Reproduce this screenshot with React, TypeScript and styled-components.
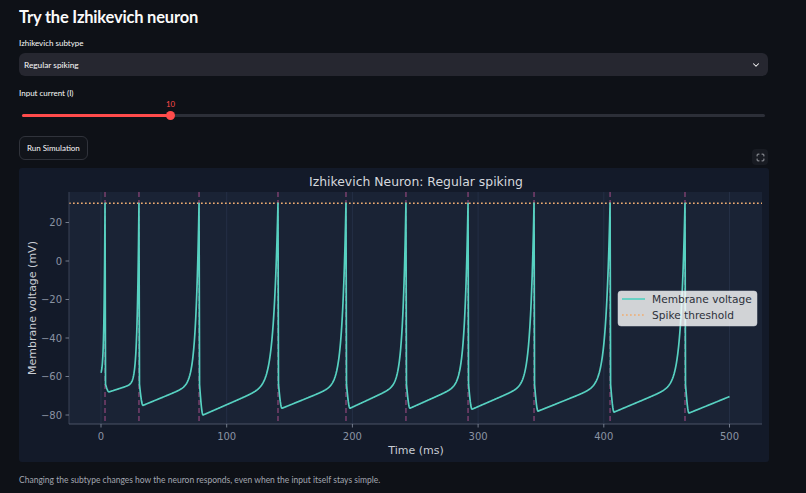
import React from 'react';
import styled, { createGlobalStyle } from 'styled-components';
import { ChevronDown, Maximize } from 'lucide-react';

const GlobalStyle = createGlobalStyle`
  html, body {
    margin: 0;
    padding: 0;
    background: #0e1117;
  }
  body {
    font-family: Lato, "Noto Sans", sans-serif;
    color: #fafafa;
  }
`;

// simulation output, read off the run that the page shows
const SPIKES = [3.2, 30.2, 78.0, 140.8, 194.9, 242.6, 292.0, 344.5, 405.0, 464.6];
const TROUGHS = [-68, -75, -80, -76.5, -76.5, -76.5, -77, -78, -78.5, -79];
const T_END = 500;

const FIG_W = 750;
const FIG_H = 294;
const AX = { left: 50, right: 743, top: 24, bottom: 256 };

const sx = (t: number) => 82 + 1.257 * t;
const sy = (v: number) => 93 - 1.925 * v;

const K = 17;
const rise = (vmin: number, p: number) => {
  const A = -63 - vmin;
  return vmin + A * p + (30 - vmin - A) * (Math.exp(K * p) - 1) / (Math.exp(K) - 1);
};

function voltagePath(): string {
  const pts: [number, number][] = [];
  const t0 = SPIKES[0];
  for (let i = 0; i <= 20; i++) {
    const p = i / 20;
    pts.push([p * t0, -58 + 88 * (Math.exp(4 * p) - 1) / (Math.exp(4) - 1)]);
  }
  SPIKES.forEach((ts, i) => {
    const vmin = TROUGHS[i];
    const next = i + 1 < SPIKES.length ? SPIKES[i + 1] : 528;
    pts.push([ts + 0.4, -64]);
    const tmin = ts + 3.2;
    for (let k = 1; k <= 8; k++) {
      const p = k / 8;
      pts.push([ts + 0.4 + p * 2.8, -64 + (vmin + 64) * Math.sin((p * Math.PI) / 2)]);
    }
    const end = Math.min(next, T_END);
    for (let t = tmin + 0.25; t < end; t += 0.25) {
      pts.push([t, Math.min(rise(vmin, (t - tmin) / (next - tmin)), 30)]);
    }
    if (next <= T_END) pts.push([next, 30]);
    else pts.push([T_END, rise(vmin, (T_END - tmin) / (next - tmin))]);
  });
  return pts
    .map(([t, v], i) => `${i ? 'L' : 'M'}${sx(t).toFixed(2)},${sy(v).toFixed(2)}`)
    .join('');
}

const X_TICKS = [0, 100, 200, 300, 400, 500];
const Y_TICKS = [20, 0, -20, -40, -60, -80];

const fmt = (n: number) => (n < 0 ? `\u2212${-n}` : `${n}`);

const Page = styled.main`
  display: flex;
  flex-direction: column;
  padding: 6px 38px 0 19px;
`;

const Title = styled.h1`
  margin: 0;
  font-size: 16.5px;
  line-height: 22px;
  font-weight: 700;
  letter-spacing: -0.2px;
`;

const FieldLabel = styled.div<{ $top: number }>`
  margin-top: ${(p) => p.$top}px;
  font-size: 8px;
  line-height: 12px;
  color: #fafafa;
`;

const Select = styled.div`
  margin-top: 4px;
  height: 23px;
  border-radius: 6px;
  background: #262730;
  display: flex;
  align-items: center;
  justify-content: space-between;
  padding: 0 7px 0 5px;
  font-size: 8.3px;
`;

const Slider = styled.div`
  position: relative;
  height: 22px;
  margin: 0 3px 0 3px;
`;

const Track = styled.div`
  position: absolute;
  left: 0;
  right: 0;
  top: 15px;
  height: 3px;
  border-radius: 2px;
  background: #2c2f38;
`;

const Fill = styled.div`
  height: 100%;
  border-radius: 2px;
  background: #ff4b4b;
`;

const Thumb = styled.div`
  position: absolute;
  top: 12px;
  width: 9px;
  height: 9px;
  margin-left: -4.5px;
  border-radius: 50%;
  background: #ff4b4b;
`;

const ThumbValue = styled.div`
  position: absolute;
  top: 0;
  width: 30px;
  margin-left: -15px;
  text-align: center;
  font-size: 7.8px;
  line-height: 10px;
  color: #ff4b4b;
`;

const Button = styled.button`
  align-self: flex-start;
  margin-top: 15px;
  height: 24px;
  padding: 0 7px;
  border-radius: 6px;
  border: 1px solid #30333b;
  background: #11141a;
  color: #fafafa;
  font-family: inherit;
  font-size: 8px;
`;

const ChartBlock = styled.div`
  position: relative;
  margin-top: 8px;
`;

const Toolbar = styled.div`
  position: absolute;
  right: 0;
  top: -19px;
  width: 16px;
  height: 16px;
  border-radius: 4px;
  background: #181b22;
  display: flex;
  align-items: center;
  justify-content: center;
  color: #c9ccd2;
`;

const Figure = styled.svg`
  display: block;
  border-radius: 3px;
  font-family: "DejaVu Sans", sans-serif;
`;

const Caption = styled.p`
  margin: 12px 0 0;
  font-size: 8.5px;
  line-height: 12px;
  color: #a2a6b0;
`;

const TEAL = '#57d1c1';
const THRESH = '#f0ad72';
const TICK = '#8a93a3';

const NeuronChart: React.FC = () => {
  const d = voltagePath();
  return (
    <Figure width={FIG_W} height={FIG_H} viewBox={`0 0 ${FIG_W} ${FIG_H}`}>
      <rect width={FIG_W} height={FIG_H} fill="#131a29" />
      <rect x={AX.left} y={AX.top} width={AX.right - AX.left} height={AX.bottom - AX.top} fill="#1a2335" />
      {X_TICKS.map((t) => (
        <line key={t} x1={sx(t)} x2={sx(t)} y1={AX.top} y2={AX.bottom} stroke="#27324a" strokeWidth={0.8} />
      ))}
      {SPIKES.map((t) => (
        <line
          key={t}
          x1={sx(t)}
          x2={sx(t)}
          y1={AX.top}
          y2={AX.bottom}
          stroke="#a24c86"
          strokeOpacity={0.75}
          strokeWidth={1.4}
          strokeDasharray="5 3"
        />
      ))}
      <line x1={AX.left} x2={AX.right} y1={sy(30)} y2={sy(30)} stroke={THRESH} strokeWidth={1.7} strokeDasharray="1.7 2.3" />
      <path d={d} fill="none" stroke={TEAL} strokeWidth={1.7} strokeLinejoin="round" />
      <line x1={AX.left} x2={AX.left} y1={AX.top} y2={AX.bottom} stroke="#3a4356" strokeWidth={1} />
      <line x1={AX.left} x2={AX.right} y1={AX.bottom} y2={AX.bottom} stroke="#4a5366" strokeWidth={1} />
      {X_TICKS.map((t) => (
        <g key={t}>
          <line x1={sx(t)} x2={sx(t)} y1={AX.bottom} y2={AX.bottom + 3.5} stroke={TICK} strokeWidth={0.8} />
          <text x={sx(t)} y={271.5} fontSize={10} fill={TICK} textAnchor="middle">
            {fmt(t)}
          </text>
        </g>
      ))}
      {Y_TICKS.map((v) => (
        <g key={v}>
          <line x1={AX.left - 3.5} x2={AX.left} y1={sy(v)} y2={sy(v)} stroke={TICK} strokeWidth={0.8} />
          <text x={AX.left - 7} y={sy(v) + 3.6} fontSize={10} fill={TICK} textAnchor="end">
            {fmt(v)}
          </text>
        </g>
      ))}
      <text x={397} y={17.5} fontSize={12.4} fill="#d5d8de" textAnchor="middle">
        Izhikevich Neuron: Regular spiking
      </text>
      <text x={397} y={286} fontSize={11} fill="#c9cdd4" textAnchor="middle">
        Time (ms)
      </text>
      <text
        x={13}
        y={140}
        fontSize={11}
        fill="#c9cdd4"
        textAnchor="middle"
        dominantBaseline="central"
        transform="rotate(-90 13 140)"
      >
        Membrane voltage (mV)
      </text>
      <g>
        <rect x={599} y={123} width={139} height={35} rx={3} fill="#ffffff" fillOpacity={0.8} stroke="#cfd2d8" strokeWidth={0.5} />
        <line x1={603} x2={626} y1={131} y2={131} stroke={TEAL} strokeWidth={1.7} />
        <text x={633} y={135} fontSize={10.6} fill="#2d313a">
          Membrane voltage
        </text>
        <line x1={603} x2={626} y1={147} y2={147} stroke={THRESH} strokeWidth={1.7} strokeDasharray="1.7 2.3" />
        <text x={633} y={151} fontSize={10.6} fill="#2d313a">
          Spike threshold
        </text>
      </g>
    </Figure>
  );
};

const App: React.FC = () => {
  const value = 10;
  const pct = (value / 50) * 100;
  return (
    <>
      <GlobalStyle />
      <Page>
        <Title>Try the Izhikevich neuron</Title>
        <FieldLabel $top={9}>Izhikevich subtype</FieldLabel>
        <Select>
          <span>Regular spiking</span>
          <ChevronDown size={10} strokeWidth={2.5} color="#fafafa" />
        </Select>
        <FieldLabel $top={11}>Input current (I)</FieldLabel>
        <Slider>
          <Track>
            <Fill style={{ width: `${pct}%` }} />
          </Track>
          <ThumbValue style={{ left: `${pct}%` }}>{value}</ThumbValue>
          <Thumb style={{ left: `${pct}%` }} />
        </Slider>
        <Button>Run Simulation</Button>
        <ChartBlock>
          <Toolbar>
            <Maximize size={9} strokeWidth={2} />
          </Toolbar>
          <NeuronChart />
        </ChartBlock>
        <Caption>
          Changing the subtype changes how the neuron responds, even when the input itself stays simple.
        </Caption>
      </Page>
    </>
  );
};

export default App;
